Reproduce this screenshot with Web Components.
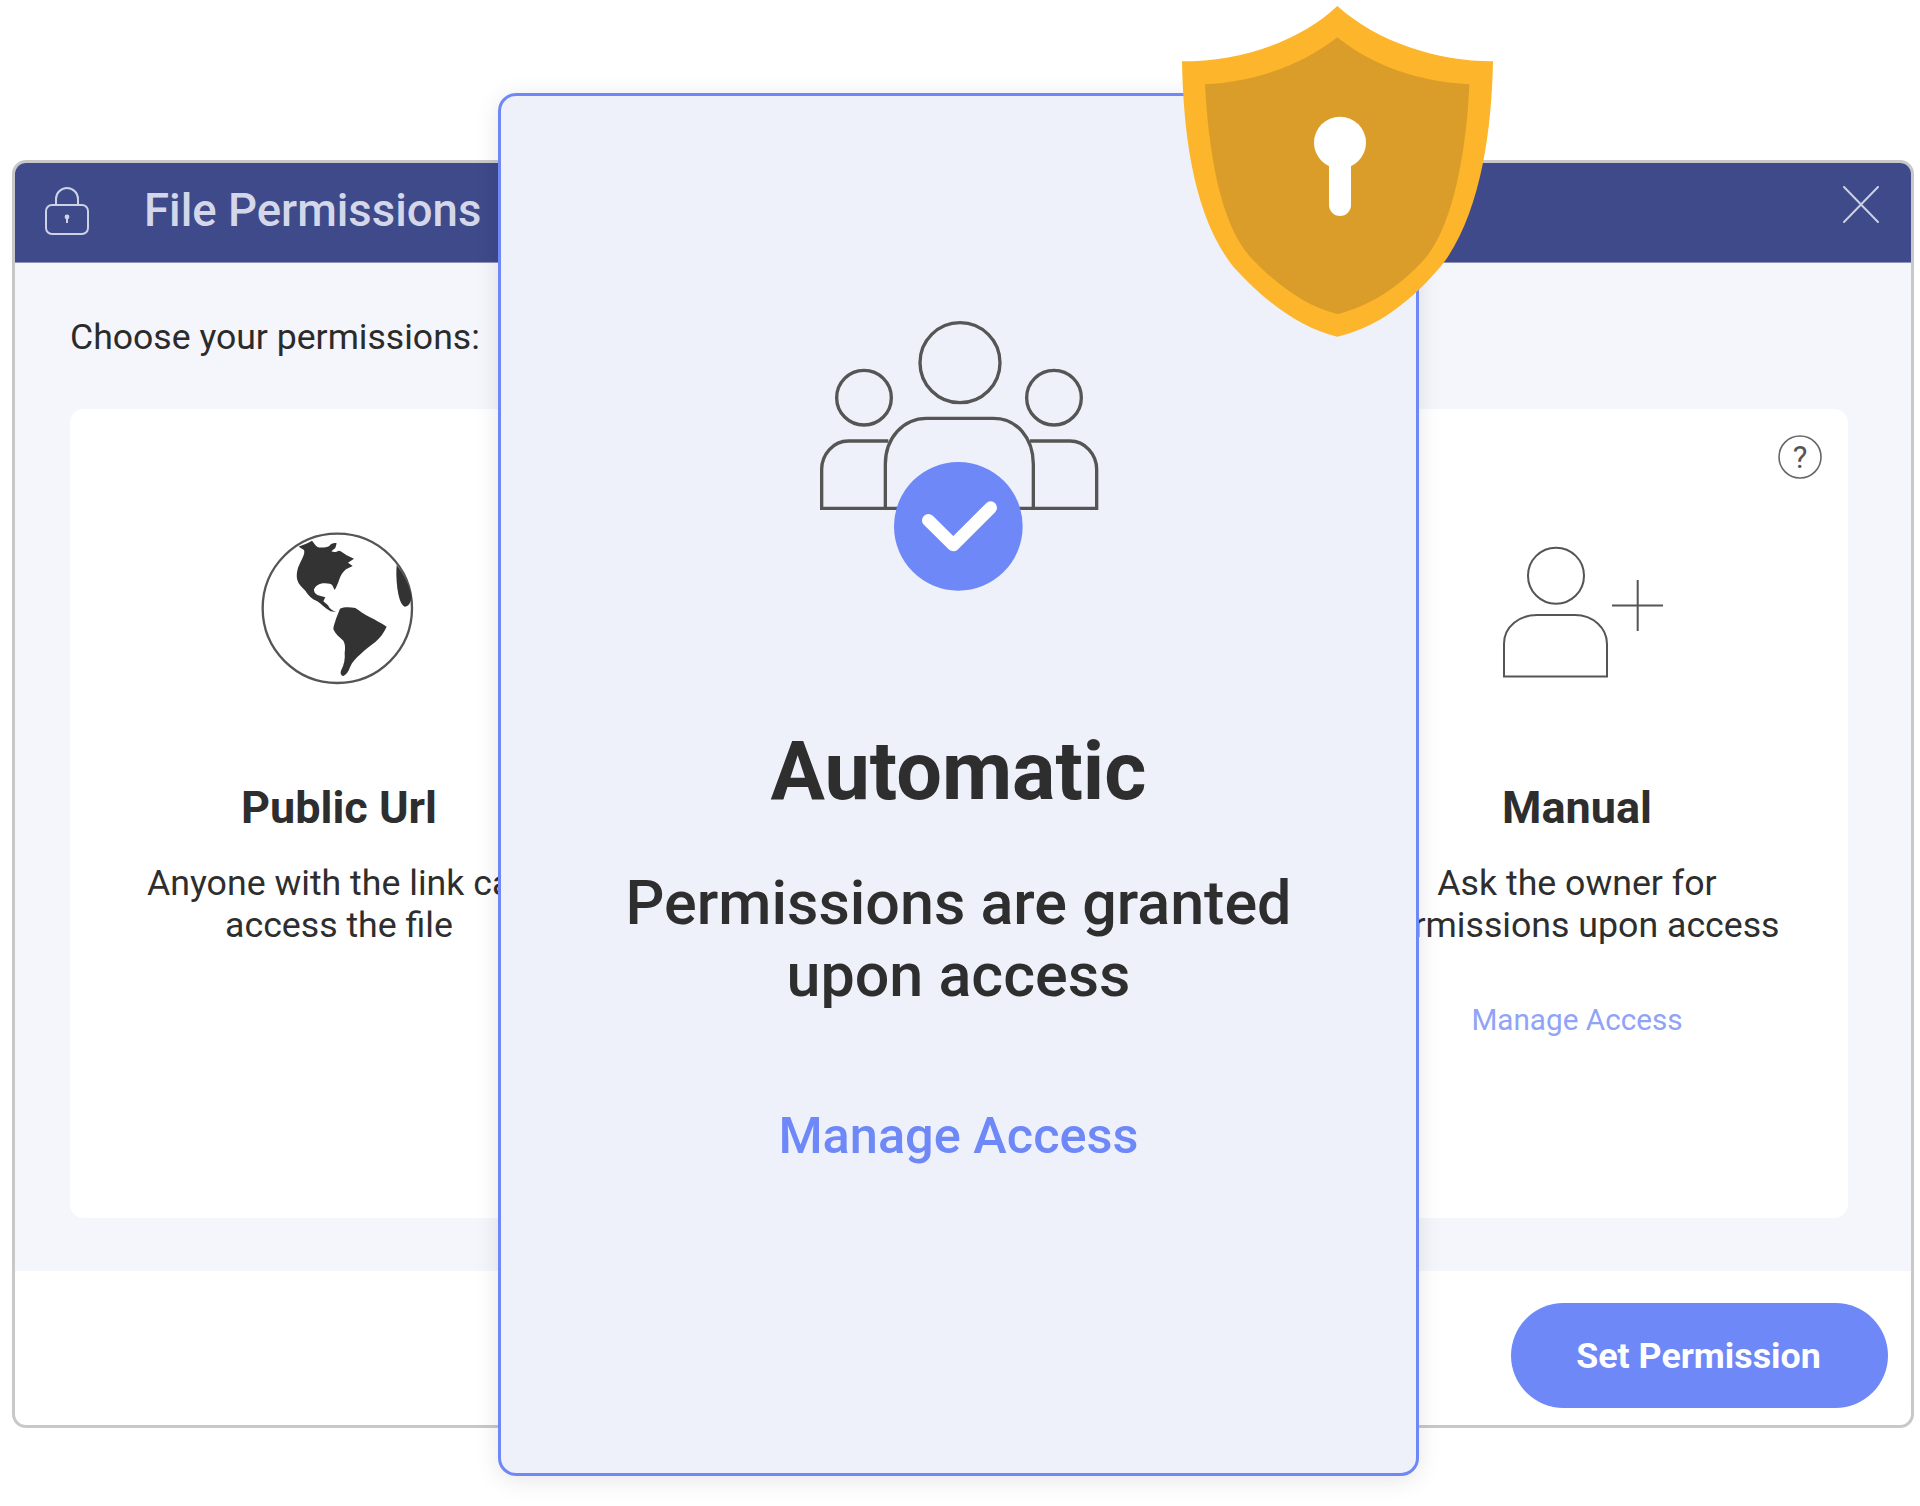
<!DOCTYPE html>
<html>
<head>
<meta charset="utf-8">
<title>File Permissions</title>
<style>
  html, body { margin: 0; padding: 0; background: #fff; }
  body { width: 1920px; height: 1506px; overflow: hidden; position: relative; font-family: Roboto, "Liberation Sans", sans-serif; }
</style>
</head>
<body>
<perm-window heading="File Permissions">
  <span slot="label">Choose your permissions:</span>
  <perm-option slot="left" name="Public Url" desc="Anyone with the link can|access the file" offset="1" top="101">
    <svg slot="icon" width="220" height="190" viewBox="0 0 660 570">
      <circle cx="322" cy="295" r="224" fill="none" stroke="#555" stroke-width="7"/>
      <path fill="#333" d="M206,110 C220,104 234,100 246,92 C252,98 256,108 264,112 C276,114 290,112 298,108 C304,100 312,98 320,100 L316,114 L304,124 C312,128 320,126 326,122 L332,124 L350,136 L372,146 L354,158 L368,168 L348,178 C338,186 332,196 328,208 C324,220 320,230 314,240 L306,224 C298,220 288,220 278,220 C266,222 256,228 252,238 C252,250 260,256 272,258 L286,262 L280,274 L294,286 C298,296 306,302 318,306 L302,304 C286,296 276,284 262,274 C246,268 234,256 226,242 C216,232 206,224 202,210 C198,194 202,176 208,164 C216,146 226,132 222,120 Z"/>
      <path fill="#333" d="M330,296 C344,290 362,292 376,294 C390,302 402,314 420,322 C436,330 454,340 470,350 C462,368 450,384 436,396 C420,408 404,420 392,432 C378,444 366,456 360,472 C356,484 350,494 340,498 C332,496 330,488 334,480 C342,464 346,446 344,428 C346,414 346,402 340,392 C328,382 316,372 310,358 C310,346 316,336 318,326 Z"/>
      <path fill="#333" d="M500,165 C520,190 538,225 545,262 C542,280 535,290 524,290 C512,285 506,262 502,235 C499,210 498,185 500,165 Z"/>
    </svg>
  </perm-option>
  <perm-option slot="right" name="Manual" desc="Ask the owner for|permissions upon access" link="Manage Access" offset="8" top="136" help>
    <svg slot="icon" width="170" height="135" viewBox="1500 545 170 135" fill="none" stroke="#555" stroke-width="2">
      <circle cx="1556" cy="575.7" r="28"/>
      <path d="M1504,676.4 V644 C1504,626 1520,615 1537,615 H1575 C1593,615 1607,628 1607,644 V676.4 Z"/>
      <path d="M1612,605.4 H1663 M1637.7,580 V631"/>
    </svg>
  </perm-option>
  <perm-button slot="action">Set Permission</perm-button>
</perm-window>

<perm-highlight name="Automatic" desc="Permissions are granted|upon access" link="Manage Access">
  <svg slot="icon" width="360" height="320" viewBox="0 0 1080 960" fill="none" stroke="#555" stroke-width="10">
    <circle cx="540" cy="215" r="120"/>
    <circle cx="252" cy="320" r="82"/>
    <circle cx="822" cy="320" r="82"/>
    <path d="M316,652 V520 C316,440 370,382 440,382 H640 C710,382 760,440 760,520 V652"/>
    <path d="M325,450 H205 C160,450 125,490 125,535 V652 H950 V535 C950,490 915,450 870,450 H750"/>
    <circle cx="535" cy="706" r="193" fill="#6e88f7" stroke="none"/>
    <path d="M445,688 L520,762 L632,650" stroke="#fff" stroke-width="38" stroke-linecap="round" stroke-linejoin="round"/>
  </svg>
</perm-highlight>

<shield-badge></shield-badge>

<script>
const lines = (text) => (text || '').split('|').map((t) => `<div>${t}</div>`).join('');

class PermWindow extends HTMLElement {
  constructor() {
    super();
    this.attachShadow({ mode: 'open' });
    this.shadowRoot.innerHTML = `
<style>
  :host {
    display: block;
    box-sizing: border-box;
    width: 1902px;
    height: 1268px;
    margin: 160px 0 0 12px;
    border: 3px solid #c8c8c8;
    border-radius: 14px;
    overflow: hidden;
    background: #fff;
  }
  header {
    display: flex;
    align-items: center;
    height: 100px;
    padding: 0 32px 0 30px;
    background: #3e4a8a;
    border-bottom: 1px solid #8d93b8;
    box-sizing: border-box;
    color: #d3d7e9;
  }
  h1 {
    margin: -4px 0 0 55px;
    flex: 1;
    font: 500 45.5px/52px Roboto, sans-serif;
  }
  .lock { margin-top: -4px; }
  .close { margin-top: -16px; }
  main {
    box-sizing: border-box;
    height: 1008px;
    padding: 0 63px 0 55px;
    background: #f5f6fb;
  }
  .label {
    height: 146px;
    padding-top: 54px;
    box-sizing: border-box;
    font: 400 35.6px/40px Roboto, sans-serif;
    color: #2b2b2b;
  }
  .card {
    display: flex;
    justify-content: space-between;
    box-sizing: border-box;
    height: 809px;
    padding-right: 2px;
    border-radius: 14px;
    background: #fff;
  }
  footer {
    display: flex;
    justify-content: flex-end;
    padding: 32px 23px 0 0;
  }
</style>
<header>
  <svg class="lock" width="44" height="48" viewBox="0 0 44 48" fill="none" stroke="#cdd2e6" stroke-width="2">
    <rect x="1" y="18" width="42" height="29" rx="6"/>
    <path d="M11,18 V12 a11,11 0 0 1 22,0 V18"/>
    <circle cx="22" cy="30" r="2.4" fill="#cdd2e6" stroke="none"/>
    <path d="M22,30 V36" stroke-width="2"/>
  </svg>
  <h1>${this.getAttribute('heading')}</h1>
  <svg class="close" width="36" height="37" viewBox="0 0 36 37" stroke="#ccd0e4" stroke-width="2" stroke-linecap="round">
    <path d="M1,1 L35,36 M35,1 L1,36"/>
  </svg>
</header>
<main>
  <div class="label"><slot name="label"></slot></div>
  <div class="card">
    <slot name="left"></slot>
    <slot name="right"></slot>
  </div>
</main>
<footer><slot name="action"></slot></footer>`;
  }
}

class PermOption extends HTMLElement {
  constructor() {
    super();
    this.attachShadow({ mode: 'open' });
    const link = this.getAttribute('link');
    const help = this.hasAttribute('help');
    this.shadowRoot.innerHTML = `
<style>
  :host {
    display: flex;
    flex-direction: column;
    align-items: center;
    position: relative;
    width: 538px;
    height: 809px;
    color: #2e2e2e;
    text-align: center;
  }
  .icon {
    box-sizing: border-box;
    height: 373px;
    display: flex;
    align-items: flex-start;
  }
  h2 { margin: 0; font: 700 45px/52px Roboto, sans-serif; }
  .desc { margin-top: 28px; font: 400 35.7px/42px Roboto, sans-serif; white-space: nowrap; }
  .link { margin-top: 56px; font: 400 29.7px/36px Roboto, sans-serif; color: #8fa3f8; }
  .help { position: absolute; top: 26px; right: 24px; }
</style>
${help ? `<svg class="help" width="44" height="44" viewBox="0 0 44 44">
  <circle cx="22" cy="22" r="21" fill="none" stroke="#666" stroke-width="1.6"/>
  <text x="22" y="33" text-anchor="middle" font-family="Roboto, sans-serif" font-size="31" fill="#555">?</text>
</svg>` : ''}
<div class="icon" style="padding-top: ${this.getAttribute('top')}px; transform: translateX(${this.getAttribute('offset') || 0}px)"><slot name="icon"></slot></div>
<h2>${this.getAttribute('name')}</h2>
<div class="desc">${lines(this.getAttribute('desc'))}</div>
${link ? `<div class="link">${link}</div>` : ''}`;
  }
}

class PermButton extends HTMLElement {
  constructor() {
    super();
    this.attachShadow({ mode: 'open' });
    this.shadowRoot.innerHTML = `
<style>
  :host {
    display: flex;
    align-items: center;
    justify-content: center;
    width: 377px;
    height: 105px;
    border-radius: 53px;
    background: #6e88f7;
    color: #fff;
    font: 700 35.8px/42px Roboto, sans-serif;
  }
  span { margin-right: 2px; }
</style>
<span><slot></slot></span>`;
  }
}

class PermHighlight extends HTMLElement {
  constructor() {
    super();
    this.attachShadow({ mode: 'open' });
    this.shadowRoot.innerHTML = `
<style>
  :host {
    display: flex;
    flex-direction: column;
    align-items: center;
    position: absolute;
    box-sizing: border-box;
    left: 498px;
    top: 93px;
    width: 921px;
    height: 1383px;
    border: 3px solid #6e88f7;
    border-radius: 18px;
    background: #eef1f9;
    box-shadow: 0 4px 24px rgba(0, 0, 0, .1);
    color: #2e2e2e;
    text-align: center;
  }
  .icon { height: 320px; margin: 195px 0 0 2px; }
  h2 { margin: 115px 0 0; font: 700 81px/92px Roboto, sans-serif; }
  .desc { margin-top: 49px; font: 500 61px/72px Roboto, sans-serif; }
  .link { margin-top: 95px; font: 500 50.5px/60px Roboto, sans-serif; color: #6e88f7; }
</style>
<div class="icon"><slot name="icon"></slot></div>
<h2>${this.getAttribute('name')}</h2>
<div class="desc">${lines(this.getAttribute('desc'))}</div>
<div class="link">${this.getAttribute('link')}</div>`;
  }
}

class ShieldBadge extends HTMLElement {
  constructor() {
    super();
    this.attachShadow({ mode: 'open' });
    this.shadowRoot.innerHTML = `
<style>
  :host { display: block; position: absolute; left: 1150px; top: 0; width: 370px; height: 350px; }
  svg { display: block; }
</style>
<svg width="370" height="350" viewBox="0 0 1110 1050">
  <path fill="#fdb52b" d="M562,18 C450,125 270,184 96,184 C100,400 130,650 250,800 C340,900 450,985 562,1010 C680,985 790,900 880,790 C990,640 1025,400 1029,184 C860,184 680,125 562,18 Z"/>
  <path fill="#db9d29" d="M562,112 C450,200 310,245 165,253 C175,450 210,670 300,770 C380,855 470,920 562,942 C660,918 750,860 830,770 C910,670 950,450 958,253 C810,245 670,200 562,112 Z"/>
  <circle cx="570" cy="428" r="78" fill="#fff"/>
  <path fill="#fff" d="M537,470 H603 V615 A33,33 0 0 1 537,615 Z"/>
</svg>`;
  }
}

customElements.define('perm-window', PermWindow);
customElements.define('perm-option', PermOption);
customElements.define('perm-button', PermButton);
customElements.define('perm-highlight', PermHighlight);
customElements.define('shield-badge', ShieldBadge);
</script>
</body>
</html>
